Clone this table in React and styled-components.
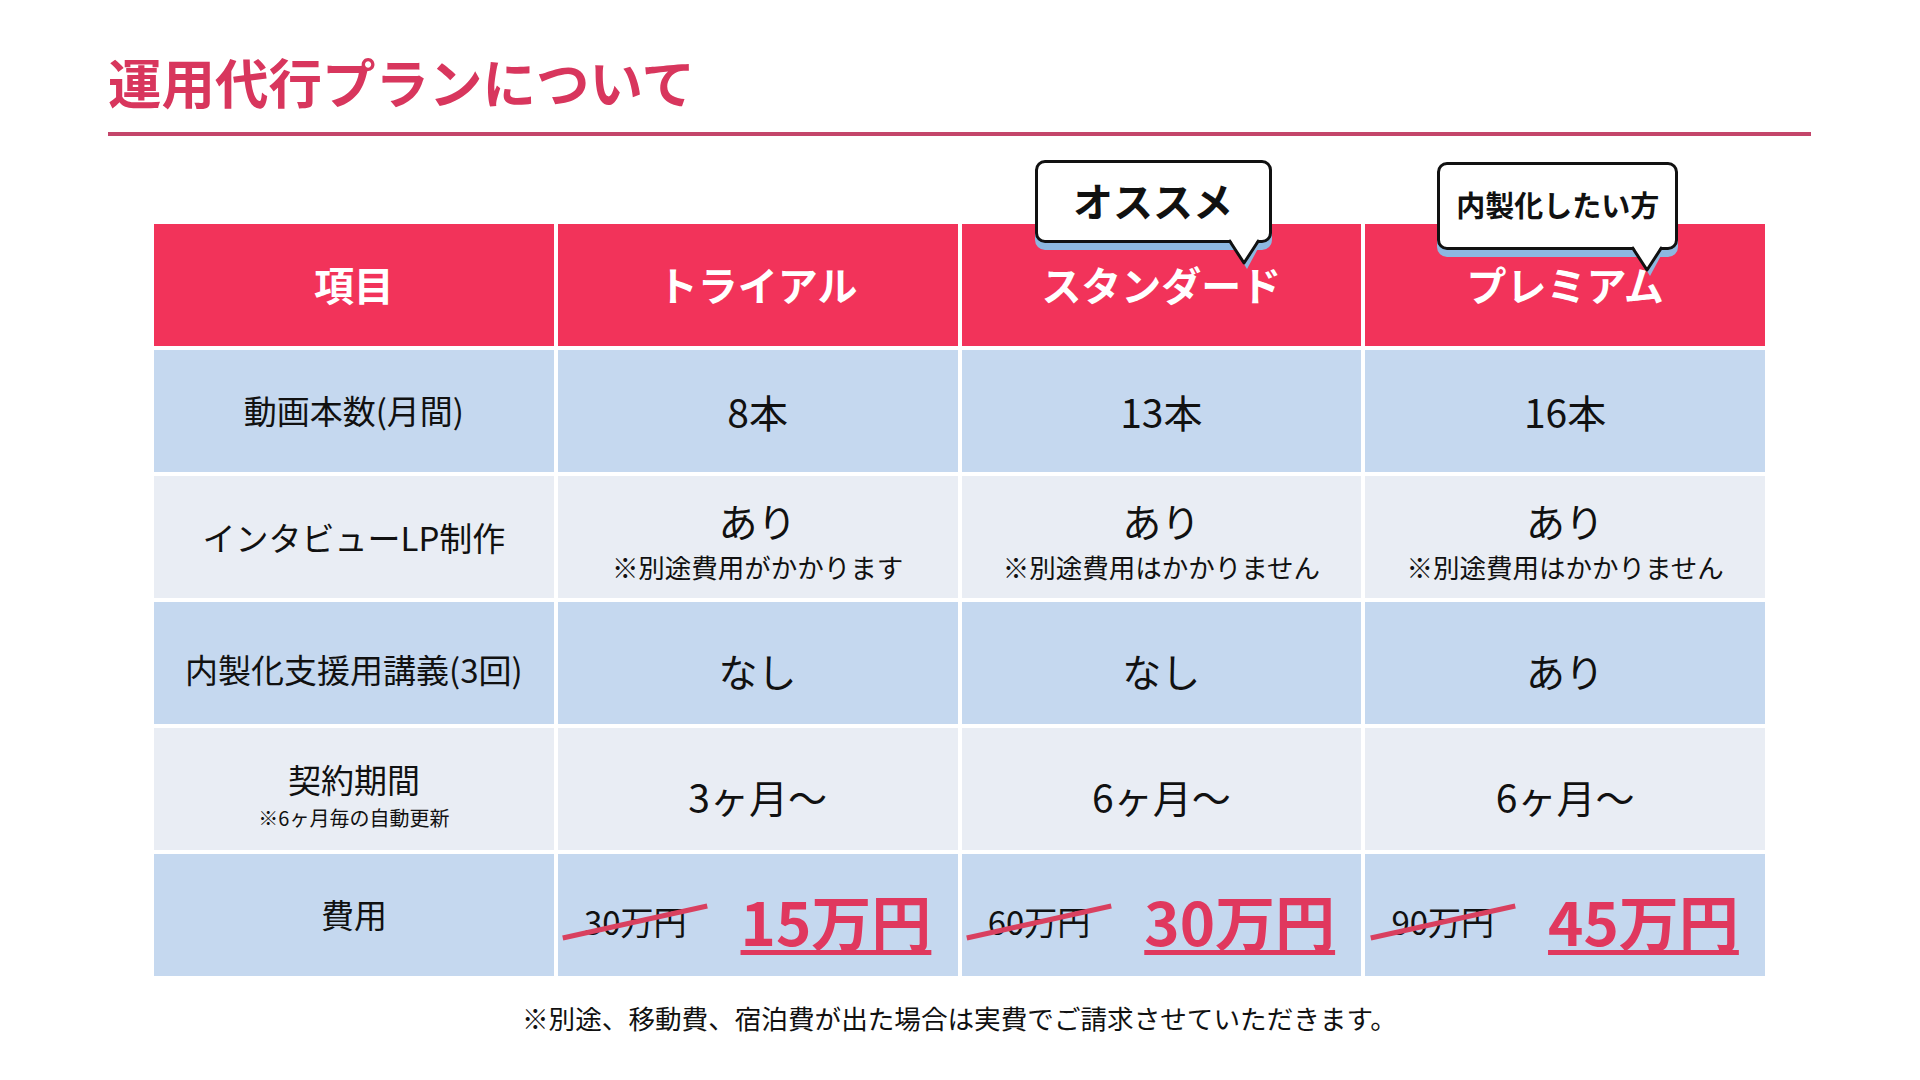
import React from "react";
import styled, { createGlobalStyle } from "styled-components";

const colors = {
  title: "#d8365d",
  rule: "#c4456a",
  head: "#f2335a",
  blueRow: "#c5d8ef",
  greyRow: "#e9edf4",
  price: "#e0385e",
  strike: "#d9405f",
  text: "#111111",
  bubbleShadow: "#8db8e0",
};

const font = `"Noto Sans CJK JP", "Noto Sans", sans-serif`;

const GlobalStyle = createGlobalStyle`
  html, body {
    margin: 0;
    background: #ffffff;
  }
  body {
    font-family: ${font};
    color: ${colors.text};
  }
`;

const Page = styled.div`
  width: 1920px;
  height: 1080px;
  box-sizing: border-box;
  padding: 48px 109px 0 108px;
  display: flex;
  flex-direction: column;
  overflow: hidden;
`;

const Title = styled.h1`
  margin: 0;
  font-size: 53.5px;
  line-height: 65px;
  font-weight: 700;
  color: ${colors.title};
`;

const Rule = styled.div`
  margin-top: 19px;
  height: 4px;
  background: ${colors.rule};
`;

const Table = styled.div`
  margin: 88px 0 0 46px;
  width: 1611px;
  display: grid;
  grid-template-columns: repeat(4, 1fr);
  grid-auto-rows: 122px;
  gap: 4px;
`;

const HeadCell = styled.div`
  position: relative;
  background: ${colors.head};
  color: #ffffff;
  font-size: 40px;
  font-weight: 700;
  display: flex;
  align-items: center;
  justify-content: center;
  padding-bottom: 3px;
`;

const Cell = styled.div`
  background: ${(p) => (p.$tone === "blue" ? colors.blueRow : colors.greyRow)};
  display: flex;
  flex-direction: column;
  align-items: center;
  justify-content: center;
  text-align: center;
  padding-top: ${(p) => p.$shift || 0}px;
`;

const Label = styled.div`
  font-size: 33px;
  line-height: 1.25;
`;

const Value = styled.div`
  font-size: 39px;
  line-height: 1.2;
`;

const Note = styled.div`
  font-size: ${(p) => (p.$small ? "20px" : "26.5px")};
  line-height: 1.3;
  margin-top: ${(p) => (p.$small ? "4px" : "6px")};
`;

const PriceCell = styled(Cell)`
  flex-direction: row;
  gap: 54px;
  padding-top: 10px;
`;

const OldPrice = styled.span`
  position: relative;
  font-size: 33px;
  line-height: 1;
  margin-top: 2px;

  &::after {
    content: "";
    position: absolute;
    left: 50%;
    top: 50%;
    width: 148px;
    height: 5px;
    background: ${colors.strike};
    transform: translate(-50%, -30%) rotate(-12.5deg);
  }
`;

const NewPrice = styled.span`
  font-size: 60px;
  line-height: 1;
  font-weight: 700;
  color: ${colors.price};
  text-decoration: underline;
  text-decoration-thickness: 5px;
  text-underline-offset: 4px;
`;

const Bubble = styled.div`
  position: absolute;
  z-index: 2;
  left: ${(p) => p.$left}px;
  top: ${(p) => p.$top}px;
  width: ${(p) => p.$width}px;
  height: ${(p) => p.$height}px;
  box-sizing: border-box;
  background: #ffffff;
  border: 3px solid #111111;
  border-radius: 10px;
  box-shadow: 0 7px 0 ${colors.bubbleShadow};
  color: #111111;
  font-size: ${(p) => p.$size}px;
  font-weight: 700;
  display: flex;
  align-items: center;
  justify-content: center;
  padding-bottom: 4px;
`;

const Tail = styled.svg`
  position: absolute;
  right: ${(p) => p.$right}px;
  bottom: -29px;
  width: 36px;
  height: 32px;
  overflow: visible;
`;

const Footer = styled.div`
  margin-top: 24px;
  width: 1611px;
  margin-left: 46px;
  text-align: center;
  font-size: 26.6px;
  line-height: 36px;
`;

const BubbleTail = ({ right }) => (
  <Tail $right={right} viewBox="0 0 36 32">
    <polygon points="4,6 34,6 20,32" fill={colors.bubbleShadow} />
    <polygon points="2,0 32,0 17,26" fill="#ffffff" />
    <polyline
      points="2,3 17,26 32,3"
      fill="none"
      stroke="#111111"
      strokeWidth="3"
      strokeLinejoin="round"
    />
  </Tail>
);

const plans = [
  { name: "トライアル", videos: "8本", lpNote: "※別途費用がかかります", lecture: "なし", term: "3ヶ月〜", old: "30万円", price: "15万円" },
  { name: "スタンダード", videos: "13本", lpNote: "※別途費用はかかりません", lecture: "なし", term: "6ヶ月〜", old: "60万円", price: "30万円", bubble: { text: "オススメ", left: 73, top: -64, width: 237, height: 83, size: 40, tail: 6 } },
  { name: "プレミアム", videos: "16本", lpNote: "※別途費用はかかりません", lecture: "あり", term: "6ヶ月〜", old: "90万円", price: "45万円", bubble: { text: "内製化したい方", left: 72, top: -62, width: 241, height: 88, size: 29, tail: 9 } },
];

const App = () => {
  return (
    <>
      <GlobalStyle />
      <Page>
        <Title>運用代行プランについて</Title>
        <Rule />

        <Table>
          <HeadCell>項目</HeadCell>
          {plans.map((plan) => (
            <HeadCell key={plan.name}>
              {plan.name}
              {plan.bubble && (
                <Bubble
                  $left={plan.bubble.left}
                  $top={plan.bubble.top}
                  $width={plan.bubble.width}
                  $height={plan.bubble.height}
                  $size={plan.bubble.size}
                >
                  {plan.bubble.text}
                  <BubbleTail right={plan.bubble.tail} />
                </Bubble>
              )}
            </HeadCell>
          ))}

          <Cell $tone="blue"><Label>動画本数(月間)</Label></Cell>
          {plans.map((plan) => (
            <Cell $tone="blue" key={plan.name}><Value>{plan.videos}</Value></Cell>
          ))}

          <Cell $shift={2}><Label>インタビューLP制作</Label></Cell>
          {plans.map((plan) => (
            <Cell $shift={7} key={plan.name}>
              <Value>あり</Value>
              <Note>{plan.lpNote}</Note>
            </Cell>
          ))}

          <Cell $tone="blue" $shift={14}><Label>内製化支援用講義(3回)</Label></Cell>
          {plans.map((plan) => (
            <Cell $tone="blue" $shift={14} key={plan.name}><Value>{plan.lecture}</Value></Cell>
          ))}

          <Cell $shift={12}>
            <Label>契約期間</Label>
            <Note $small>※6ヶ月毎の自動更新</Note>
          </Cell>
          {plans.map((plan) => (
            <Cell $shift={14} key={plan.name}><Value>{plan.term}</Value></Cell>
          ))}

          <Cell $tone="blue"><Label>費用</Label></Cell>
          {plans.map((plan) => (
            <PriceCell $tone="blue" key={plan.name}>
              <OldPrice>{plan.old}</OldPrice>
              <NewPrice>{plan.price}</NewPrice>
            </PriceCell>
          ))}
        </Table>

        <Footer>※別途、移動費、宿泊費が出た場合は実費でご請求させていただきます。</Footer>
      </Page>
    </>
  );
};

export default App;
